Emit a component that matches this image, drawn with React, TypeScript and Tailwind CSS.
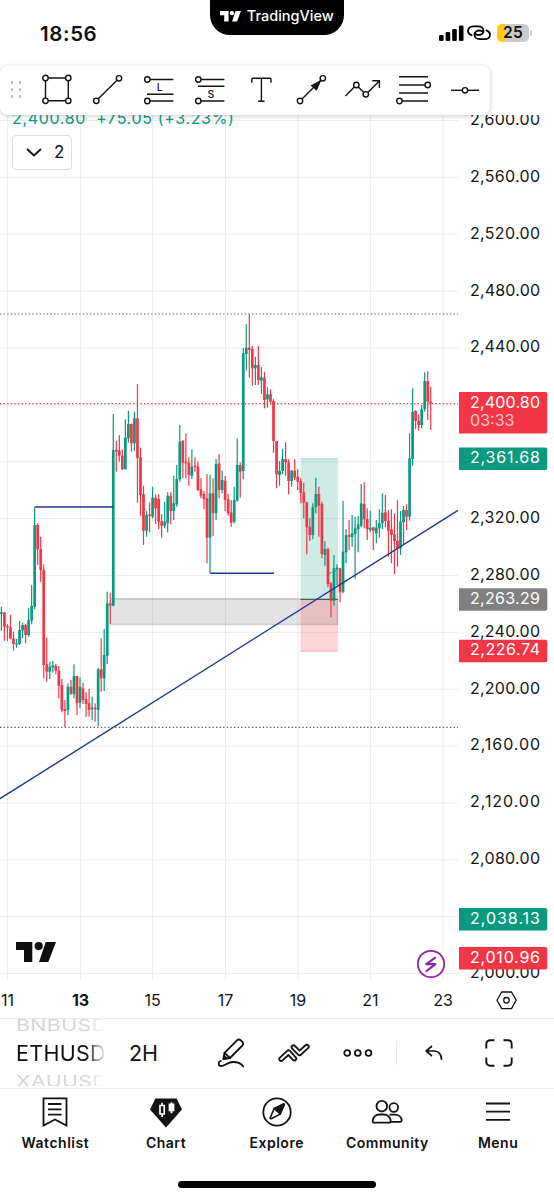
import type { ReactNode } from 'react';

const UP = '#089981';
const DOWN = '#f23645';
const INK = '#131313';

// [high, low, bodyTop, bodyBottom, up]
const candles: number[][] = [
  [606.7, 630.7, 612.3, 614, 1], [612.3, 640.7, 612.3, 626.7, 0], [624.3, 641, 626, 627.5, 0],
  [615, 639.3, 627.3, 638.3, 0], [631.7, 650.7, 638.3, 644, 0], [639, 647.7, 643.3, 644.3, 1],
  [621, 645, 630, 644, 1], [622.7, 638.3, 625, 630.5, 1], [624, 643.3, 625, 635, 0],
  [608.3, 636.7, 620, 635, 1], [585, 624.3, 606, 620.7, 1], [507.3, 609.3, 525, 606.7, 1],
  [523.3, 565, 525, 549.3, 0], [536.7, 581.7, 549.3, 570.3, 0], [564.3, 678.3, 570, 665, 0],
  [637.7, 681.7, 664.3, 671.7, 0], [661.7, 679, 666.7, 671.7, 1], [661, 672.7, 665.3, 667.3, 1],
  [664, 674.3, 666, 670.7, 0], [666, 698.3, 670.7, 685.7, 0], [679, 712.3, 685, 710, 0],
  [700, 727, 709, 711, 0], [683.3, 715, 686.7, 710, 1], [680, 694.3, 686.7, 694.3, 0],
  [664.3, 698.3, 676, 694, 1], [675.7, 715, 676, 703.3, 0], [677.3, 708.3, 686.7, 702.7, 1],
  [682.7, 704, 688.3, 700, 0], [692.3, 716.7, 699, 704, 0], [689, 716.7, 703.3, 710, 0],
  [696.7, 720, 707.7, 709.3, 1], [703.3, 721.7, 707.7, 709.3, 0], [667.7, 726, 669.3, 710, 1],
  [638.3, 691.7, 669.3, 678.3, 0], [629, 691, 655, 678.3, 1], [591.7, 664, 603.3, 655.7, 1],
  [592.7, 624, 603.3, 605.7, 0], [414, 605.7, 450, 605.7, 1], [441, 471.7, 450, 451.5, 0],
  [435, 461.7, 450.5, 455.7, 0], [449.3, 470, 455.7, 469.3, 0], [419.3, 469.3, 437.7, 469.3, 1],
  [410.7, 442.7, 424, 438.3, 1], [423.3, 451.7, 424, 443.3, 0], [411.7, 451, 418.3, 443.3, 1],
  [384, 502.7, 418.3, 458, 0], [447.7, 515.7, 457.3, 495, 0], [485.7, 545, 494.3, 530.7, 0],
  [511, 536.7, 515, 530.7, 1], [502.3, 532.3, 514.3, 516, 0], [486.7, 518.3, 497.7, 516.7, 1],
  [494.3, 524, 497.7, 508.3, 0], [494.3, 529.3, 499, 521.7, 0], [514.3, 537.7, 521, 525.7, 0],
  [501.7, 528.3, 521.7, 525.7, 1], [492.3, 532.3, 495.7, 523.3, 1], [492.3, 524.3, 495.7, 511, 0],
  [475.7, 520, 503.3, 511, 1], [465, 506.7, 479, 504.3, 1], [425, 481.7, 441.7, 479.3, 1],
  [440, 478.3, 441, 462.7, 0], [433.3, 478.3, 461.7, 463.3, 0], [457.3, 485.7, 462.7, 475, 0],
  [449.3, 479, 466.7, 475.7, 1], [457.3, 471.7, 465.7, 467, 0], [461.7, 491, 466.7, 490, 0],
  [478.3, 498.3, 489.3, 495.7, 0], [491, 509.3, 494, 499, 0], [474, 563.3, 498.3, 537.7, 0],
  [475, 573.3, 493.3, 537.7, 1], [478.3, 536, 493.3, 513.3, 0], [459, 520, 464, 513.3, 1],
  [454, 498.3, 463.3, 490, 0], [470.7, 493.3, 480, 490, 1], [476, 511, 480.7, 500, 0],
  [494, 515.7, 499.3, 513.3, 0], [500, 526.7, 512.7, 522.7, 0], [486.7, 523.3, 500, 521.7, 1],
  [438.3, 501.7, 465, 500.7, 1], [462.3, 497.7, 465, 471.7, 0], [347.7, 479.3, 353.3, 471, 1],
  [324.3, 370.7, 347.7, 354, 1], [314, 377.7, 347.7, 350, 0], [346, 385.7, 349.3, 368.3, 0],
  [356.7, 385, 365, 368.3, 1], [346, 385, 365, 380, 0], [366.7, 394, 377.3, 380.7, 1],
  [371.7, 408.3, 377.7, 400, 0], [387.3, 407.7, 394.3, 399.3, 1], [389.3, 404.3, 394.3, 401.7, 0],
  [399, 452.7, 401, 441, 0], [441, 488.3, 441, 474.3, 0], [461, 485.7, 471, 475, 1],
  [449, 474.3, 459.3, 471, 1], [442.3, 475.7, 459, 462.3, 0], [459.3, 494.3, 462.3, 481, 0],
  [470, 486.7, 470.7, 481, 1], [459.3, 480, 470.7, 477.7, 0], [469.3, 490, 476.7, 481.7, 0],
  [478.3, 503.3, 481, 492.7, 0], [482.7, 518.3, 492.3, 502.7, 0], [501.7, 554.3, 502.3, 527.3, 0],
  [518.3, 541, 526.7, 535, 0], [503.3, 539.3, 507.3, 535, 1], [477.7, 513.3, 494, 507.3, 1],
  [486.7, 536.7, 494, 505.7, 0], [501.7, 558.3, 504, 554, 0], [541, 565.7, 549, 555, 1],
  [547.7, 587.3, 549.3, 584, 0], [582.3, 617.3, 583.3, 600.7, 0], [555, 605.7, 568.3, 600.7, 1],
  [564.3, 585, 567.7, 569.3, 1], [567.7, 602.3, 568.3, 592.3, 0], [501, 593.3, 551.7, 591.7, 1],
  [529, 563.3, 535, 552.3, 1], [520, 550, 535, 537, 0], [515, 546.7, 533.3, 537.3, 1],
  [516.7, 579, 528.3, 534, 1], [516, 552.3, 524.3, 529.3, 1], [484, 527.3, 503.3, 525.7, 1],
  [482.3, 528.3, 504, 519.3, 0], [508.3, 540, 519, 529.3, 0], [510.7, 532.3, 527.7, 530, 1],
  [526.7, 550, 527.3, 530.7, 0], [520, 543.3, 527.7, 533.3, 1], [509.3, 537.7, 523.3, 528.3, 1],
  [493.3, 529, 512.7, 523.3, 1], [495, 527.3, 512.3, 521, 0], [510, 556.7, 520.7, 530.7, 0],
  [509.3, 563.3, 529.3, 535, 0], [513.3, 574.3, 534.3, 541, 0], [500, 566.7, 540.7, 548.3, 0],
  [511, 555, 521.7, 548.3, 1], [506, 544.3, 510, 522.3, 1], [504.3, 530, 510, 516.7, 0],
  [433.3, 520.7, 458.3, 516.7, 1], [388.3, 465.7, 411.7, 459, 1], [410, 429.3, 411, 421, 0],
  [414.3, 430.7, 420.7, 425, 0], [405, 428.3, 409.3, 425, 1], [372.3, 411.7, 381, 409.3, 1],
  [371, 420, 381, 401.7, 0], [386.7, 430, 401.7, 403.3, 0],
];

const days = [
  { x: 7.5, label: '11' },
  { x: 80.5, label: '13', bold: true },
  { x: 152.5, label: '15' },
  { x: 225.5, label: '17' },
  { x: 298, label: '19' },
  { x: 370.5, label: '21' },
  { x: 443, label: '23' },
];

const prices = [
  '2,600.00', '2,560.00', '2,520.00', '2,480.00', '2,440.00', '', '', '2,320.00',
  '2,280.00', '2,240.00', '2,200.00', '2,160.00', '2,120.00', '2,080.00', '', '2,000.00',
];

const tags = [
  { y: 392, h: 41.5, base: 407.8, label: '2,400.80', fill: DOWN, timer: '03:33' },
  { y: 447.5, h: 22.5, base: 463, label: '2,361.68', fill: UP },
  { y: 588.3, h: 22.5, base: 603.8, label: '2,263.29', fill: '#808080' },
  { y: 639.8, h: 22.5, base: 655.3, label: '2,226.74', fill: DOWN },
  { y: 908, h: 22.5, base: 923.8, label: '2,038.13', fill: UP },
  { y: 947, h: 22.5, base: 962.6, label: '2,010.96', fill: DOWN },
];

const gridY = (i: number) => 120.5 + 56.87 * i;

function Logo({ className }: { className: string }) {
  return (
    <svg viewBox="0 0 40 20" className={className} fill="currentColor">
      <path d="M0 0h16.3v20H8V8H0z" />
      <circle cx="22.7" cy="4.1" r="4.1" />
      <path d="M29.7 0H40l-7.7 20H23z" />
    </svg>
  );
}

function PriceChart() {
  return (
    <svg viewBox="0 115 554 903" className="block h-[903px] w-[554px] font-['Inter',sans-serif]" fontSize="16">
      <g stroke="#ececec" strokeWidth="1">
        {days.map((d) => (
          <line key={d.label} x1={d.x} x2={d.x} y1="115" y2="980" />
        ))}
        {prices.map((_, i) => (
          <line key={i} x1="0" x2="458" y1={gridY(i)} y2={gridY(i)} />
        ))}
      </g>

      <rect x="110.5" y="598" width="227.5" height="26.5" fill="#808080" fillOpacity="0.22" />
      <path d="M110.5 599H338M110.5 624.5H338M337.5 598v27" stroke="#808080" strokeOpacity="0.3" strokeWidth="1.6" />
      <rect x="300.5" y="458.5" width="37.5" height="141" fill={UP} fillOpacity="0.2" />
      <rect x="300.5" y="599.5" width="37.5" height="52" fill={DOWN} fillOpacity="0.2" />
      <path d="M300.5 458.8H338" stroke={UP} strokeOpacity="0.25" />
      <path d="M300.5 651.2H338" stroke={DOWN} strokeOpacity="0.25" />
      <path d="M300.5 599.5H338" stroke="#555" />
      <path d="M329 573.5l9-3.5" stroke="#777" strokeDasharray="3 2" />

      {candles.map(([high, low, top, bottom, up], i) => {
        const x = 1.4 + i * 3.0235;
        const color = up ? UP : DOWN;
        return (
          <g key={i} fill={color}>
            <rect x={x - 0.6} y={high} width="1.2" height={low - high} />
            <rect x={x - 1.35} y={top} width="2.7" height={Math.max(bottom - top, 1.2)} />
          </g>
        );
      })}

      <g stroke="#1b3793" strokeWidth="1.4" fill="none">
        <path d="M0 798.7L458 510.3" />
        <path d="M34.7 507H113" />
        <path d="M210.3 573.3H274" />
      </g>
      <g strokeWidth="1.2" strokeDasharray="1.3 2.3">
        <path d="M0 314H458" stroke="#555" />
        <path d="M0 727.3H458" stroke="#555" />
        <path d="M0 403.6H458" stroke={DOWN} />
      </g>

      <g fill={INK}>
        {prices.map((p, i) => p && (
          <text key={p} x="470" y={gridY(i) + 4.4} textLength="70" lengthAdjust="spacing">{p}</text>
        ))}
        {days.map((d) => (
          <text key={d.label} x={d.x} y="1006" textAnchor="middle" fontWeight={d.bold ? 700 : 400}>{d.label}</text>
        ))}
      </g>

      {tags.map((t) => (
        <g key={t.label}>
          <path
            d={`M459 ${t.y}h86.3a2 2 0 0 1 2 2v${t.h - 4}a2 2 0 0 1-2 2H459z`}
            fill={t.fill}
          />
          <text x="470" y={t.base} fill="#fff" textLength="70" lengthAdjust="spacing">{t.label}</text>
          {t.timer && (
            <text x="470" y="426" fill="#fff" fillOpacity="0.72" textLength="44.5" lengthAdjust="spacing">{t.timer}</text>
          )}
        </g>
      ))}

      <circle cx="431" cy="964" r="13.2" fill="#fff" stroke="#8e24aa" strokeWidth="1.8" />
      <path d="M435 957.8l-8.8 6.4h9.2l-8.8 6.8" fill="none" stroke="#8e24aa" strokeWidth="2.2" strokeLinejoin="round" strokeLinecap="round" />

      <g fill="none" stroke={INK} strokeWidth="1.3">
        <path d="M501.7 992h9.8l4.7 8.3-4.7 8.3h-9.8l-4.7-8.3z" strokeLinejoin="round" />
        <circle cx="506.5" cy="1000.3" r="2.8" />
      </g>
    </svg>
  );
}

function ToolIcon({ children }: { children: ReactNode }) {
  return (
    <div className="flex w-[50.9px] justify-center">
      <svg viewBox="0 0 36 36" className="size-9" fill="none" stroke="#131313" strokeWidth="1.4">
        {children}
      </svg>
    </div>
  );
}

function Dot({ x, y }: { x: number; y: number }) {
  return <circle cx={x} cy={y} r="2.7" fill="#fff" />;
}

function Toolbar() {
  return (
    <div className="relative z-10 flex h-[49px] w-[490px] items-center rounded-lg bg-white pb-[2px] shadow-[0_1px_5px_rgba(0,0,0,0.22)]">
      <div className="ml-[10.5px] grid w-[12px] grid-cols-2 gap-x-[5px] gap-y-[4px]">
        {[0, 1, 2, 3, 4, 5].map((n) => (
          <span key={n} className="size-[2.8px] rounded-full bg-[#b5b5b5]" />
        ))}
      </div>
      <div className="ml-[10.4px] flex">
        <ToolIcon>
          <path d="M6.5 6h22.8v22.8H6.5z" />
          <Dot x={6.5} y={6} /><Dot x={29.3} y={6} /><Dot x={6.5} y={28.8} /><Dot x={29.3} y={28.8} />
        </ToolIcon>
        <ToolIcon>
          <path d="M6.3 28.8L29 6.3" />
          <Dot x={6.3} y={28.8} /><Dot x={29} y={6.3} />
        </ToolIcon>
        <ToolIcon>
          <path d="M6.3 7.5h26.1M6 22.3h26.4M6.3 29h26.1" />
          <Dot x={6.3} y={7.5} /><Dot x={6.3} y={29} />
          <text x="18.8" y="18.9" textAnchor="middle" fontSize="10.5" fill="#131313" stroke="none" className="font-['Inter',sans-serif] font-medium">L</text>
        </ToolIcon>
        <ToolIcon>
          <path d="M6.3 7.5h26.1M6 14.3h26.4M6.3 29h26.1" />
          <Dot x={6.3} y={7.5} /><Dot x={6.3} y={29} />
          <text x="19" y="25.6" textAnchor="middle" fontSize="10.5" fill="#131313" stroke="none" className="font-['Inter',sans-serif] font-medium">S</text>
        </ToolIcon>
        <ToolIcon>
          <path d="M8.8 10.7V7.5q0-1.2 1.2-1.2h16.8q1.2 0 1.2 1.2v3.2M18.4 6.3v23M15.2 29.3h6.4" />
        </ToolIcon>
        <ToolIcon>
          <path d="M6 29L28.8 6.3" />
          <path d="M16.4 13.4L27.5 7.8l-4.7 11z" fill="#131313" stroke="none" />
          <Dot x={6} y={29} /><Dot x={28.8} y={6.3} />
        </ToolIcon>
        <ToolIcon>
          <path d="M.5 24l10.8-11 9.5 9.5L34.3 9M27.2 8.7h7.2V16" />
          <Dot x={11.3} y={13} /><Dot x={20.8} y={22.3} />
        </ToolIcon>
        <ToolIcon>
          <path d="M3 4.7h29M3 13h29M3 21h29M3 29h29" />
          <Dot x={31.7} y={13} /><Dot x={3.4} y={29} />
        </ToolIcon>
        <ToolIcon>
          <path d="M4 18.3h28" />
          <Dot x={18} y={18.3} />
        </ToolIcon>
      </div>
    </div>
  );
}

function StatusBar() {
  return (
    <header className="relative flex h-[66px] justify-between pl-10 pr-[22px]">
      <span className="mt-[18.5px] text-[20.5px] leading-[30px] font-semibold tracking-[0.6px]">18:56</span>
      <div className="absolute top-0 left-[209.5px] flex h-[34.5px] w-[134.5px] justify-center gap-[6px] rounded-b-[20px] bg-black text-white">
        <Logo className="mt-[11px] h-[10.5px] w-[21px]" />
        <span className="mt-[6px] text-[14.5px] leading-5 font-medium">TradingView</span>
      </div>
      <div className="mt-6 flex h-[18px] items-center">
        <svg viewBox="0 0 25 16" className="h-4 w-[25px]" fill="#000">
          <rect x="0" y="10" width="4.6" height="6" rx="1.2" />
          <rect x="6.6" y="7" width="4.6" height="9" rx="1.2" />
          <rect x="13.2" y="4" width="4.6" height="12" rx="1.2" />
          <rect x="19.9" y="0.5" width="4.6" height="15.5" rx="1.2" />
        </svg>
        <svg viewBox="0 0 24 16" className="ml-[3.5px] h-4 w-6" fill="none" stroke="#000" strokeWidth="1.8" strokeLinecap="round">
          <path d="M4.6 10.2C2.4 9.4 1 8 1 6c0-2.8 2.2-4.7 5.2-4.7h5c3.1 0 5.3 1.9 5.3 4.5S14.3 10 11.6 10c-1.800 0-3.100-.6-3.900-1.600" />
          <path d="M19.400 5.300c2.200.8 3.600 2.200 3.600 4.200 0 2.800-2.200 4.700-5.200 4.700h-5c-3.100 0-5.300-1.900-5.300-4.500s2.200-4.200 4.900-4.200c1.800 0 3.100.6 3.900 1.600" />
        </svg>
        <span className="ml-[6px] flex h-[18px] w-8 items-center justify-center rounded-[5px] bg-[linear-gradient(90deg,#fccb10_25%,#cbcbcb_25%)] text-[15.5px] font-semibold tracking-[0.3px]">25</span>
        <span className="ml-px h-[6px] w-[2px] rounded-r-full bg-[#cbcbcb]" />
      </div>
    </header>
  );
}

function SymbolBar() {
  return (
    <div className="flex h-[70px] items-center border-t border-[#e9e9e9] pb-[2px]">
      <div className="ml-4 flex h-[67px] w-[90px] flex-col justify-between text-[21.5px] tracking-[0.3px] whitespace-nowrap mask-[linear-gradient(90deg,#000_78%,transparent)]">
        <span className="mt-[-4px] h-5 origin-center scale-y-[0.74] leading-5 text-[#d6d6d6]">BNBUSD</span>
        <span className="h-6 leading-6">ETHUSD</span>
        <span className="mb-[-5px] h-5 origin-center scale-y-[0.74] leading-5 text-[#d6d6d6]">XAUUSD</span>
      </div>
      <span className="ml-[23px] w-8 text-[21.5px] leading-6">2H</span>
      <svg viewBox="0 0 28 30" className="ml-[56px] h-[30px] w-7" fill="none" stroke="#131313" strokeWidth="1.8" strokeLinejoin="round" strokeLinecap="round">
        <path d="M7.5 14.800L20 2.300q1.900-1.500 3.800 0l1.600 1.600q1.500 1.800 0 3.600L13 20l-6.700 1z" />
        <path d="M7.500 14.800L13 20" />
        <path d="M6.300 21l.7-4 3.600 3.300z" fill="#131313" strokeWidth="1" />
        <path d="M3.700 23C1 23.700.8 27.900 4.100 28c4 0 6.400-4 12.200-4 4.600 0 8 1.600 9.900 4.600" />
      </svg>
      <svg viewBox="0 0 32 20" className="ml-[33px] h-5 w-8" fill="none" strokeLinecap="round" strokeLinejoin="round">
        <path d="M3.200 16l7.300-6.700 5.800 6.300" stroke="#131313" strokeWidth="5.700" />
        <path d="M3.200 16l7.300-6.700 5.800 6.300" stroke="#fff" strokeWidth="2" />
        <path d="M15.500 4.300l6 6 7.300-6.600" stroke="#131313" strokeWidth="5.700" />
        <path d="M15.500 4.300l6 6 7.300-6.600" stroke="#fff" strokeWidth="2" />
      </svg>
      <svg viewBox="0 0 30 8" className="ml-[33px] h-2 w-[30px]" fill="none" stroke="#131313" strokeWidth="1.8">
        <circle cx="4.200" cy="4" r="2.900" />
        <circle cx="14.800" cy="4" r="2.900" />
        <circle cx="25.500" cy="4" r="2.900" />
      </svg>
      <span className="ml-[22.5px] h-6 w-px bg-[#e9e9e9]" />
      <svg viewBox="0 0 18 16" className="ml-[28px] h-4 w-[18px]" fill="none" stroke="#131313" strokeWidth="1.700" strokeLinecap="round" strokeLinejoin="round">
        <path d="M6.500 1.500L1.200 6l5.300 4.700M1.500 6h8c4 0 7 3.500 7 8.200" />
      </svg>
      <svg viewBox="0 0 28 28" className="ml-[42px] size-7" fill="none" stroke="#131313" strokeWidth="1.900">
        <path d="M1.300 9.500V5.300q0-4 4-4h4.200M18.500 1.300h4.200q4 0 4 4v4.200M26.700 18.500v4.200q0 4-4 4h-4.200M9.500 26.700H5.300q-4 0-4-4v-4.200" />
      </svg>
    </div>
  );
}

function NavItem({ label, children }: { label: string; children: ReactNode }) {
  return (
    <div className="flex w-[110.7px] flex-col items-center">
      <svg viewBox="0 0 32 32" className="size-8" fill="none" stroke="#131313" strokeWidth="1.8">
        {children}
      </svg>
      <span className="mt-[5px] text-[14px] leading-5 font-semibold tracking-[0.5px]">{label}</span>
    </div>
  );
}

function BottomNav() {
  return (
    <nav className="flex h-[93px] border-t border-[#e9e9e9] pt-[7px]">
      <NavItem label="Watchlist">
        <path d="M4.5 2.300h23v27.200L16 23.500 4.500 29.500zM9 8h13.500M9 13.300h13.500M9 18.600h13.500" />
      </NavItem>
      <NavItem label="Chart">
        <path d="M5.400 2.600h21.200L32 13.500 16 31.500 0 13.500z" fill="#131313" stroke="none" />
        <path d="M10 9.500h4.200v8.500H10zM12.100 6.800v2.700M12.100 18v3" stroke="#fff" strokeWidth="1.700" />
        <path d="M19.500 8.300h4v6h-4zM21.500 6.200v11" stroke="#fff" strokeWidth="1.800" fill="#fff" />
      </NavItem>
      <NavItem label="Explore">
        <circle cx="16" cy="16" r="13.700" />
        <path d="M13.300 12.300L9.200 21.800q-.3 1.200.9.900l9.200-4.600z" strokeWidth="1.600" strokeLinejoin="round" />
        <path d="M13.300 12.300l9.300-4.600q1.200-.2.900 1l-4.200 9.400z" fill="#131313" strokeWidth="1.400" strokeLinejoin="round" />
      </NavItem>
      <NavItem label="Community">
        <circle cx="10.800" cy="10.200" r="5.300" />
        <circle cx="22.800" cy="11.500" r="4.300" />
        <path d="M3.200 26.700c-1.100 0-1.600-.8-1.500-1.800.3-3.900 3.200-6.400 6.900-6.400h4c3.900 0 6.800 2.500 7.100 6.400.1 1-.4 1.800-1.500 1.800zM18.500 18.700h5.500c3.700 0 6.400 2.300 6.700 5.500.1 1-.5 1.600-1.500 1.600h-9.500" strokeLinejoin="round" />
      </NavItem>
      <NavItem label="Menu">
        <path d="M4 7.500h24M4 15.700h24M4 23.800h24" />
      </NavItem>
    </nav>
  );
}

export default function App() {
  return (
    <div className="flex h-[1199px] w-[554px] flex-col overflow-hidden bg-white font-['Inter',sans-serif] text-[#0f0f0f]">
      <StatusBar />
      <Toolbar />
      <main className="relative h-[903px] overflow-hidden">
        <PriceChart />
        <div className="absolute top-[-9px] left-3 text-[16px] leading-6 tracking-[0.65px] whitespace-nowrap text-[#089981]">
          2,400.80&nbsp; +75.05 (+3.23%)
        </div>
        <div className="absolute top-[20px] left-3 flex h-[35px] w-[60px] items-center rounded-[4px] border border-[#dcdcdc] bg-white pl-[13px] text-[17px]">
          <svg viewBox="0 0 16 9" className="h-[9px] w-4" fill="none" stroke="#131313" strokeWidth="1.9">
            <path d="M1 1l7 6.500L15 1" />
          </svg>
          <span className="ml-[12px]">2</span>
        </div>
        <div className="absolute top-[827px] left-4">
          <Logo className="h-5 w-10" />
        </div>
      </main>
      <SymbolBar />
      <BottomNav />
      <div className="mx-auto h-[7px] w-[198px] rounded-full bg-black" />
    </div>
  );
}
